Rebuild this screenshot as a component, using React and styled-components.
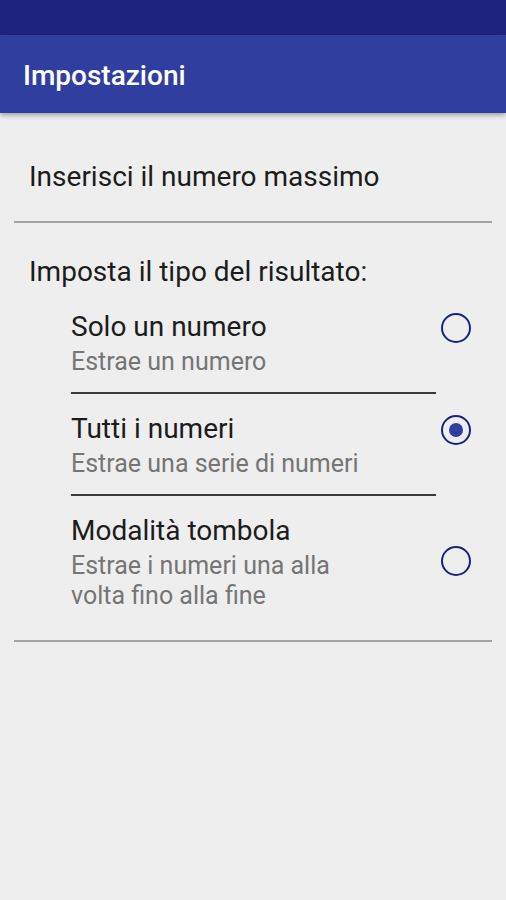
import React from "react";
import styled, {createGlobalStyle} from "styled-components";

const Global = createGlobalStyle`
  html, body {
    margin: 0;
    padding: 0;
    background: #eeeeee;
  }
  body {
    font-family: Roboto, "Noto Sans", "Liberation Sans", sans-serif;
  }
`;

const Screen = styled.div`
  width: 506px;
  height: 900px;
  background: #eeeeee;
  display: flex;
  flex-direction: column;
  overflow: hidden;
`;

const StatusBar = styled.div`
  height: 35px;
  background: #1f237f;
`;

const AppBar = styled.div`
  height: 78px;
  background: #303f9f;
  display: flex;
  align-items: center;
  padding: 0 23px;
  box-shadow: 0 2px 5px rgba(0, 0, 0, 0.35);
  position: relative;
  z-index: 1;
`;

const Title = styled.h1`
  margin: 0;
  font-size: 28px;
  font-weight: 500;
  color: #ffffff;
  padding-top: 2px;
`;

const Content = styled.div`
  padding: 0 14px;
  display: flex;
  flex-direction: column;
`;

const Pref = styled.div`
  padding: 46px 15px 26px;
  font-size: 28px;
  line-height: 36px;
  color: #1c1c1c;
`;

const Category = styled.div`
  padding: 31px 15px 2px;
  font-size: 28px;
  line-height: 36px;
  color: #1c1c1c;
`;

const Divider = styled.div`
  height: 2px;
  background: #a3a3a3;
`;

const Item = styled.div`
  display: flex;
  align-items: center;
  padding-left: 57px;
`;

const TextBlock = styled.div`
  width: 365px;
  padding: 19px 0 ${p => p.$last ? "29px" : "15px"};
  border-bottom: ${p => p.$last ? "none" : "2px solid #3a3a3a"};
`;

const ItemTitle = styled.div`
  font-size: 28px;
  line-height: 32px;
  color: #1c1c1c;
`;

const Summary = styled.div`
  margin-top: 4px;
  max-width: 300px;
  font-size: 25px;
  line-height: 30px;
  color: #757575;
`;

const Radio = styled.div`
  box-sizing: border-box;
  width: 30px;
  height: 30px;
  margin-left: 5px;
  margin-bottom: ${p => p.$lift}px;
  border-radius: 50%;
  border: 2.5px solid #1a237e;
  display: flex;
  align-items: center;
  justify-content: center;

  &::after {
    content: "";
    width: 14px;
    height: 14px;
    border-radius: 50%;
    background: #303f9f;
    display: ${p => p.$checked ? "block" : "none"};
  }
`;

const options = [
    {title: "Solo un numero", summary: "Estrae un numero", checked: false, lift: 30},
    {title: "Tutti i numeri", summary: "Estrae una serie di numeri", checked: true, lift: 30},
    {title: "Modalità tombola", summary: "Estrae i numeri una alla volta fino alla fine", checked: false, lift: 14},
];

export default function App() {
    return (
        <Screen>
            <Global/>
            <StatusBar/>
            <AppBar>
                <Title>Impostazioni</Title>
            </AppBar>
            <Content>
                <Pref>Inserisci il numero massimo</Pref>
                <Divider/>
                <Category>Imposta il tipo del risultato:</Category>
                {options.map((o, i) => (
                    <Item key={o.title}>
                        <TextBlock $last={i === options.length - 1}>
                            <ItemTitle>{o.title}</ItemTitle>
                            <Summary>{o.summary}</Summary>
                        </TextBlock>
                        <Radio $checked={o.checked} $lift={o.lift}/>
                    </Item>
                ))}
                <Divider/>
            </Content>
        </Screen>
    );
}
